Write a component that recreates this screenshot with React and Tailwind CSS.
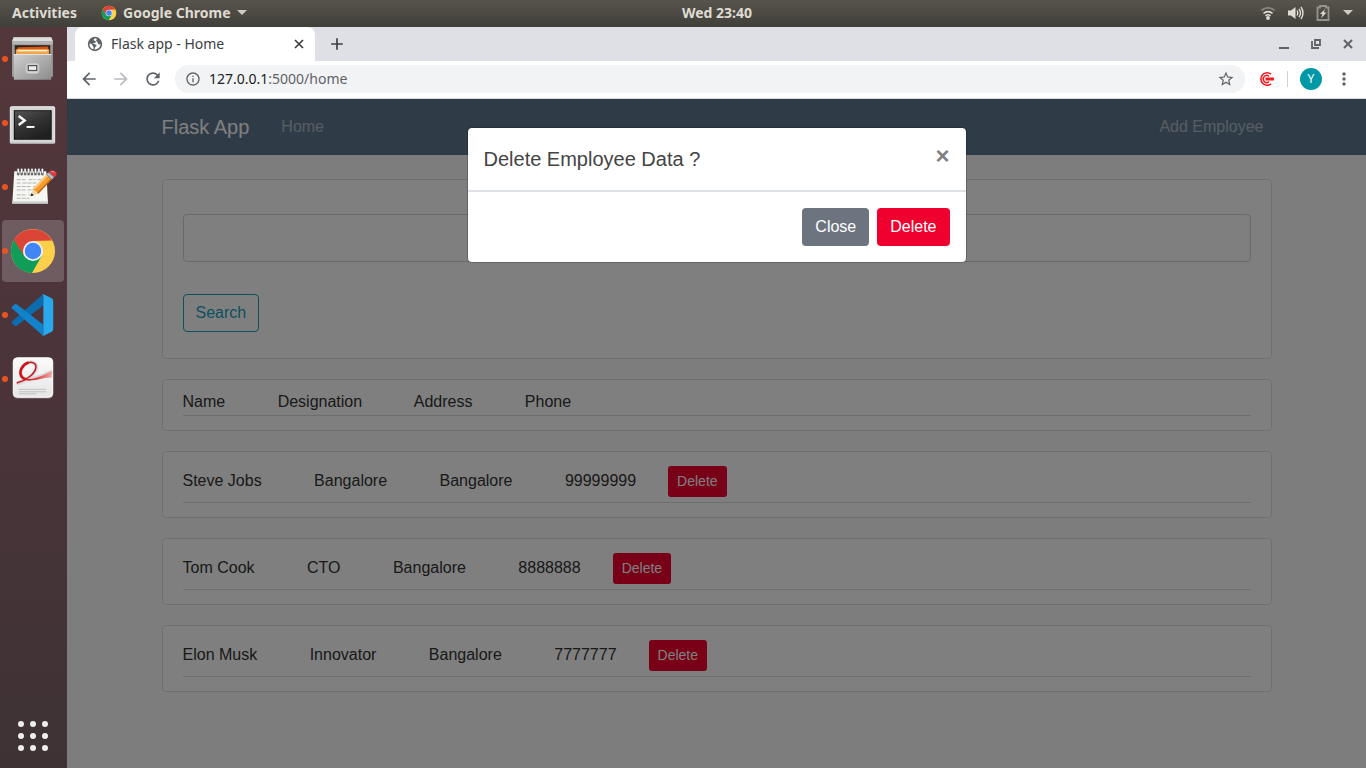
import { MdArrowBack, MdArrowForward, MdRefresh, MdInfoOutline, MdStarBorder, MdMoreVert, MdAdd } from "react-icons/md";

const employees = [
  { name: "Steve Jobs", designation: "Bangalore", address: "Bangalore", phone: "99999999" },
  { name: "Tom Cook", designation: "CTO", address: "Bangalore", phone: "8888888" },
  { name: "Elon Musk", designation: "Innovator", address: "Bangalore", phone: "7777777" },
];

function ChromeMark({ className }) {
  return (
    <svg viewBox="0 0 48 48" className={className} aria-hidden="true">
      <circle cx="24" cy="24" r="22" fill="#fdd04c" />
      <path d="M4.95 13 A22 22 0 0 0 23 46 L32.7 29 L24 24 L15.3 29 L5.5 12 Z" fill="#109d58" />
      <path d="M4.95 13 A22 22 0 0 1 43.05 13.5 L24 14 L15 29 Z" fill="#dc4437" />
      <circle cx="24" cy="24" r="10" fill="#f1f1f1" />
      <circle cx="24" cy="24" r="8.2" fill="#4285f4" />
    </svg>
  );
}

function Globe() {
  return (
    <svg viewBox="0 0 16 16" className="h-4 w-4" aria-hidden="true">
      <circle cx="8" cy="8" r="7.200" fill="#5f6368" />
      <path d="M8.500 2.300C6 3 6.500 4.500 8 5c1.500.4 1 1.800-.5 2H5l3.500 1.500c1.500.7 1.200 2-.2 2.400L7.500 13.500c3.500 0 6-2.500 6-5.500-1.200.8-2.500.3-2.700-1-.2-1.500-1.800-1.300-1.600-2.700.1-.8.700-1 .7-1.600z" fill="#fff" />
      <path d="M2.500 7.500c1.500 0 2.500.7 2.800 1.800.3 1 1.300 1 1.200 2.200v1.800C4 13 2.300 10.500 2.500 7.500z" fill="#fff" />
    </svg>
  );
}

function Files() {
  return (
    <svg viewBox="0 0 67 64" className="w-full h-full" aria-hidden="true">
      <defs>
        <linearGradient id="cab" x1="0" y1="0" x2="1" y2="1">
          <stop offset="0" stopColor="#cfcfcf" />
          <stop offset="1" stopColor="#8c8c8c" />
        </linearGradient>
      </defs>
      <path d="M13.500 10h38.500l1.700 4v36h-41.500V14z" fill="#9b9b9b" />
      <path d="M14 10h38l1.700 4H12.300z" fill="#dedede" />
      <path d="M12.300 14h41.400v3H12.300z" fill="#b4b4b4" />
      <rect x="15" y="18" width="36" height="10" fill="#2b211b" />
      <path d="M18 20l31-.8V24H17z" fill="#d4571a" />
      <path d="M16 22h34v6H16z" fill="#f0a448" />
      <path d="M18 23.500h30" stroke="#fff0d0" strokeWidth="1.500" />
      <rect x="14" y="27" width="38" height="26" rx=".5" fill="url(#cab)" />
      <path d="M14 27.500h38" stroke="#e4e4e4" />
      <rect x="26.500" y="36.500" width="13" height="10" rx="2.500" fill="#d9d9d9" stroke="#c6c6c6" />
      <rect x="28.700" y="38.700" width="8.600" height="5" fill="#eee" stroke="#555" strokeWidth="1.300" />
    </svg>
  );
}

function Terminal() {
  return (
    <svg viewBox="0 0 67 64" className="w-full h-full" aria-hidden="true">
      <defs>
        <linearGradient id="scr" x1="0" y1="0" x2=".6" y2="1">
          <stop offset="0" stopColor="#555" />
          <stop offset=".5" stopColor="#343434" />
          <stop offset="1" stopColor="#202020" />
        </linearGradient>
      </defs>
      <rect x="10.500" y="15.500" width="45" height="37" rx="1" fill="#d5d5d5" stroke="#f1f1f1" />
      <path d="M10 52.500h46" stroke="#999" />
      <rect x="14" y="19" width="38.500" height="30" fill="#0f0f0f" />
      <rect x="15" y="20" width="36.500" height="28" fill="url(#scr)" />
      <path d="M19 25l6 4.500-6 4.500" fill="none" stroke="#f5f5f5" strokeWidth="2.500" />
      <path d="M27 36h8" stroke="#fff" strokeWidth="2" />
    </svg>
  );
}

function Notepad() {
  const rings = [18.5, 22, 25.5, 29, 32.5, 36, 39.5, 43];
  return (
    <svg viewBox="0 0 67 64" className="w-full h-full" aria-hidden="true">
      <path d="M14.500 16h32.500l1.700 32.500H12.500z" fill="#f6f6f3" />
      <path d="M12.500 46.500h36.200v2.500H12.300z" fill="#cdd2ce" />
      <g stroke="#adadad" strokeWidth=".9">
        <path d="M17 24.500h10m2 0h7m2 0h6M17 28h5m1 0h14M17 31.500h15m2 0h3M17 35h9m2 0h8M17 40h10m2 0h4M17 43.500h13" strokeDasharray="4 1" />
      </g>
      {rings.map((x) => (
        <g key={x}>
          <path d={`M${x} 19v-4.500`} stroke="#6f6f6f" strokeWidth="2.600" strokeLinecap="round" />
          <path d={`M${x} 17v-3`} stroke="#fafafa" strokeWidth="1.500" strokeLinecap="round" />
        </g>
      ))}
      <path d="M31 41.500l2.300-7.500 5.700 4.800z" fill="#f1d9ae" />
      <path d="M31 41.500l1-3.200 2.500 2z" fill="#222" />
      <path d="M33.300 34L47 19.500l5.500 5L39 38.800z" fill="#f39c2b" />
      <path d="M34.800 34L48 20.200" stroke="#ffc97a" strokeWidth="1.800" />
      <path d="M38.400 38.400L51.800 24.200" stroke="#b9600f" strokeWidth="1.300" />
      <path d="M47 19.500l2.700-2.700 5.500 5-2.700 2.700z" fill="#9ba6ae" />
      <path d="M48.200 18.300l5.500 5" stroke="#dde3e7" />
      <path d="M49.700 16.800c2.800-3.500 9-.8 7.500 3-.4 1-1.200 1.700-2 2z" fill="#e2383b" />
      <path d="M51.500 16.700c1.500-1 3.500-.3 4.200.9" stroke="#f68d8d" fill="none" />
    </svg>
  );
}

function ChromeDock() {
  return (
    <span className="flex h-[62px] w-[62px] items-center justify-center rounded bg-[#6f5c60]">
      <ChromeMark className="h-12 w-12" />
    </span>
  );
}

function Code() {
  return (
    <svg viewBox="0 0 67 64" className="w-full h-full" aria-hidden="true">
      <path d="M43.500 11.200L12.200 38.500q-1 1 0 2l2.800 2.300q1 .7 2 0L44 22z" fill="#0b6cb0" />
      <path d="M43.500 52.800L12.200 25.500q-1-1 0-2l2.800-2.300q1-.7 2 0L44 42z" fill="#1283cb" />
      <path d="M42.500 11.500q1-.8 2.200-.3L52.500 15q1.500.7 1.500 2.200v29.600q0 1.500-1.500 2.200l-7.800 3.800q-1.200.5-2.200-.3 1.500.3 1.500-1.500V13q0-1.800-1.500-1.500z" fill="#29a8ee" />
    </svg>
  );
}

function Reader() {
  return (
    <svg viewBox="0 0 67 64" className="w-full h-full" aria-hidden="true">
      <defs>
        <linearGradient id="swash" x1="0" y1="0" x2="1" y2="0">
          <stop offset="0" stopColor="#cf1a20" />
          <stop offset=".5" stopColor="#de4246" />
          <stop offset="1" stopColor="#f0a5a5" />
        </linearGradient>
        <linearGradient id="sheet" x1="0" y1="0" x2="0" y2="1">
          <stop offset="0" stopColor="#fafafa" />
          <stop offset="1" stopColor="#e6e6e6" />
        </linearGradient>
      </defs>
      <rect x="13" y="11" width="41" height="41" rx="4.500" fill="#736669" />
      <rect x="13.500" y="10.500" width="40" height="40" rx="4" fill="url(#sheet)" stroke="#fff" />
      <path d="M17 36.500C27 34 36 27 37 20.500c.5-4-4-6.500-8.500-5-6 2-9.500 9.500-6.500 14 3.500 5 12 3.500 31-5" fill="none" stroke="#c4c4c4" strokeWidth="4" opacity=".5" />
      <path d="M17 36C27 33.500 36 26.500 36.500 20c.3-4-4-6-8-4.500-6 2-9.500 9.500-6.500 14 2 3 5.500 3.700 9.500 3" fill="none" stroke="#c4161d" strokeWidth="1.500" />
      <path d="M29 15.300c-6 1.700-10 9-7.500 13.500 1 1.900 2.500 2.900 4.500 3.400" fill="none" stroke="#cc1219" strokeWidth="2.600" />
      <path d="M23 31c7 3.200 17-.5 29.500-7v6.500C42 29.500 33 37 23 31z" fill="url(#swash)" />
      <path d="M19 42.500h28M19 45h28M19 47h18" stroke="#bcbcbc" strokeWidth=".9" />
    </svg>
  );
}

const dock = [
  { label: "Files", Icon: Files },
  { label: "Terminal", Icon: Terminal },
  { label: "Text Editor", Icon: Notepad },
  { label: "Google Chrome", Icon: ChromeDock },
  { label: "Visual Studio Code", Icon: Code },
  { label: "Document Viewer", Icon: Reader },
];

function TopBar() {
  return (
    <header className="grid h-[27px] shrink-0 grid-cols-[1fr_auto_1fr] items-center bg-linear-to-b from-[#57544b] to-[#403f3a] px-3 pb-0.5 text-sm font-bold text-[#dfdbd2]">
      <div className="flex items-center gap-6">
        <button>Activities</button>
        <button className="flex items-center gap-1.5">
          <ChromeMark className="h-4 w-4" />
          Google Chrome
          <svg viewBox="0 0 10 5" className="h-[5px] w-2.5" aria-hidden="true"><path d="M0 0h10L5 5z" fill="#cfcbc3" /></svg>
        </button>
      </div>
      <time className="pl-[68px]">Wed 23:40</time>
      <div className="flex items-center justify-end gap-3">
        <svg viewBox="0 0 16 14" className="h-3.5 w-4" aria-label="Wireless network">
          <path d="M1.500 4.500C5 1 11 1 14.500 4.500" fill="none" stroke="#8a8780" strokeWidth="1.800" />
          <path d="M3.500 7.500c2.500-2.500 6.500-2.500 9 0M5.500 9.800c1.500-1.300 3.500-1.300 5 0" fill="none" stroke="#dfdbd2" strokeWidth="1.600" />
          <circle cx="8" cy="12" r="1.900" fill="#dfdbd2" />
        </svg>
        <svg viewBox="0 0 16 14" className="h-3.5 w-4" aria-label="Volume">
          <path d="M0 4.500h3L7.500 1v12L3 9.500H0z" fill="#dfdbd2" />
          <path d="M9 4.500q1.500 2.500 0 5M11 2.800q3 4.200 0 8.400M13 1q4 6 0 12" fill="none" stroke="#dfdbd2" strokeWidth="1.400" />
        </svg>
        <svg viewBox="0 0 14 16" className="h-4 w-3.5" aria-label="Battery charging">
          <path d="M4 2.500V1h6v1.500h2.500V15h-11V2.500z" fill="none" stroke="#96938b" strokeWidth="1.800" />
          <path d="M9 4L4 9h2.500L5 13.200l5.500-5.700H7.800z" fill="#dfdbd2" />
        </svg>
        <button aria-label="System menu" className="px-px">
          <svg viewBox="0 0 10 5" className="h-[5px] w-2.5" aria-hidden="true"><path d="M0 0h10L5 5z" fill="#cfcbc3" /></svg>
        </button>
      </div>
    </header>
  );
}

function Dock() {
  return (
    <nav aria-label="Dock" className="flex w-[67px] shrink-0 flex-col bg-linear-to-b from-[#53373b] via-[#4a343a] to-[#3e3334]">
      {dock.map(({ label, Icon }) => (
        <button key={label} aria-label={label} className="relative flex h-16 w-full items-center pl-0.5">
          <span className="absolute inset-0 flex items-center pr-px justify-center">
            <Icon />
          </span>
          <span className="relative h-1.5 w-1.5 rounded-full bg-[#e95420]" />
        </button>
      ))}
      <button aria-label="Show applications" className="mt-auto mr-0.5 mb-[17px] grid grid-cols-3 gap-1.5 self-center">
        {Array.from({ length: 9 }, (_, i) => (
          <span key={i} className="h-1.5 w-1.5 rounded-full bg-[#eeeeec]" />
        ))}
      </button>
    </nav>
  );
}

function Cross({ width }) {
  return (
    <svg viewBox="0 0 12 12" className="h-3 w-3" aria-hidden="true">
      <path d="M2 2l8 8M10 2l-8 8" stroke="currentColor" strokeWidth={width} />
    </svg>
  );
}

function BrowserChrome() {
  return (
    <div className="shrink-0 text-[#5f6368]">
      <div className="flex h-[34px] items-center bg-[#dee0e6] pl-2">
        <div className="flex h-full w-60 items-center rounded-t-lg bg-white pr-2.5 pl-3">
          <Globe />
          <span className="ml-2 text-sm text-[#3c4043]">Flask app - Home</span>
          <button aria-label="Close tab" className="ml-auto text-[#3c4043]"><Cross width={1.7} /></button>
        </div>
        <button aria-label="New tab" className="ml-3 text-[#3c4043]">
          <MdAdd className="h-5 w-5 stroke-current" />
        </button>
        <div className="ml-auto flex items-center gap-5 pr-3">
          <button aria-label="Minimize"><svg viewBox="0 0 12 12" className="h-3 w-3"><path d="M1 10h10" stroke="currentColor" strokeWidth="2" /></svg></button>
          <button aria-label="Restore"><svg viewBox="0 0 12 12" className="h-3 w-3"><path d="M5 2h5v5H5zM2 3v7h7" fill="none" stroke="currentColor" strokeWidth="1.800" /></svg></button>
          <button aria-label="Close window"><Cross width={2} /></button>
        </div>
      </div>
      <div className="flex h-[38px] items-center border-b border-[#d5d7da] bg-white px-3 pb-px">
        <div className="flex items-center gap-3">
          <button aria-label="Back"><MdArrowBack className="h-5 w-5" /></button>
          <button aria-label="Forward" className="text-[#b9bbbe]"><MdArrowForward className="h-5 w-5" /></button>
          <button aria-label="Reload"><MdRefresh className="h-5 w-5" /></button>
        </div>
        <div className="ml-3 flex h-7 flex-1 items-center rounded-full bg-[#f1f3f4] px-2.5">
          <MdInfoOutline className="h-4 w-4" />
          <a href="#home" className="ml-2 text-sm"><span className="text-[#202124]">127.0.0.1</span>:5000/home</a>
          <button aria-label="Bookmark this page" className="ml-auto"><MdStarBorder className="h-[18px] w-[18px]" /></button>
        </div>
        <button aria-label="Extension" className="ml-3.5">
          <svg viewBox="0 0 16 16" className="h-4 w-4" fill="none" stroke="#ee1c22">
            <path d="M12 3.200A6.200 6.200 0 1 0 12 12.800" strokeWidth="1.600" />
            <path d="M10 5.300A3.500 3.500 0 1 0 10 10.700" strokeWidth="1.500" />
            <path d="M6.500 8h8.500" strokeWidth="3" />
          </svg>
        </button>
        <span className="mx-3 h-4 w-px bg-[#cfd1d4]" />
        <button aria-label="Profile" className="flex h-[22px] w-[22px] items-center justify-center rounded-full bg-[#0097a7] text-xs text-white">Y</button>
        <button aria-label="Browser menu" className="ml-3"><MdMoreVert className="h-5 w-5" /></button>
      </div>
    </div>
  );
}

function Card({ children, className = "" }) {
  return <section className={"rounded border border-[#dfdfdf] bg-white px-5 " + className}>{children}</section>;
}

function Page() {
  return (
    <div className="flex-1 bg-[#fafafa] text-base text-[#333]">
      <nav className="h-14 bg-[#5f788f]">
        <div className="mx-auto flex h-full max-w-[1110px] items-center">
          <a href="#top" className="text-xl text-white">Flask App</a>
          <a href="#home" className="ml-8 text-white/50">Home</a>
          <a href="#add" className="ml-auto pr-2 text-white/50">Add Employee</a>
        </div>
      </nav>
      <main className="mx-auto mt-6 flex max-w-[1110px] flex-col gap-5">
        <Card className="pt-[34px] pb-[26px]">
          <form>
            <input aria-label="Search employees" className="block h-12 w-full rounded border border-[#ced4da] bg-white px-3" />
            <button type="button" className="mt-8 h-[38px] rounded border border-[#17a2b8] px-3 text-[#17a2b8]">Search</button>
          </form>
        </Card>
        <Card className="pt-2.5 pb-3.5">
          <p className="border-b border-[#dfdfdf] pb-px">
            <span className="mr-12">Name</span> <span className="mr-12">Designation</span>{" "}
            <span className="mr-12">Address</span> <span>Phone</span>
          </p>
        </Card>
        {employees.map((e) => (
          <Card key={e.name} className="pt-3.5 pb-3.5">
            <div className="flex items-start gap-8 border-b border-[#dfdfdf] pb-[5px]">
              <p className="pt-[3px]">
                <span className="mr-12">{e.name}</span> <span className="mr-12">{e.designation}</span>{" "}
                <span className="mr-12">{e.address}</span> <span>{e.phone}</span>
              </p>
              <button className="h-[31px] rounded-[3px] bg-[#f0002f] px-[9px] pb-0.5 text-sm text-white">Delete</button>
            </div>
          </Card>
        ))}
      </main>
    </div>
  );
}

function DeleteDialog() {
  return (
    <div className="absolute inset-0 flex items-start justify-center bg-black/50 pt-7">
      <div role="dialog" aria-labelledby="dialog-title" className="w-full max-w-[500px] rounded-[5px] border border-black/20 bg-white bg-clip-padding">
        <div className="flex items-start justify-between border-b-2 border-[#dee2e6] p-4">
          <h2 id="dialog-title" className="text-xl leading-[30px] text-[#444]">Delete Employee Data ?</h2>
          <button aria-label="Close dialog" className="text-2xl leading-6 font-bold text-[#808080]">×</button>
        </div>
        <div className="flex justify-end gap-2 p-4">
          <button className="h-[38px] rounded bg-[#6c757f] px-[13px] text-white">Close</button>
          <button className="h-[38px] rounded bg-[#f0002f] px-[13px] text-white">Delete</button>
        </div>
      </div>
    </div>
  );
}

export default function App() {
  return (
    <div className="flex min-h-screen flex-col font-['Noto_Sans',sans-serif]">
      <TopBar />
      <div className="flex flex-1">
        <Dock />
        <div className="flex min-w-0 flex-1 flex-col">
          <BrowserChrome />
          <div className="relative flex flex-1 flex-col font-['Liberation_Sans',Arial,sans-serif]">
            <Page />
            <DeleteDialog />
          </div>
        </div>
      </div>
    </div>
  );
}
